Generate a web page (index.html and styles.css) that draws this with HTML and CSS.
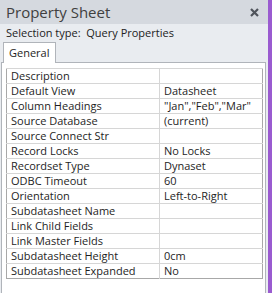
FILE: index.html
```html
<!DOCTYPE html>
<html>
<head>
<meta charset="utf-8">
<link rel="stylesheet" href="styles.css">
</head>
<body>
<div class="window">
  <div class="sheet">
    <div class="titlebar">
      <span class="title">Property Sheet</span>
      <svg class="close" width="9" height="9" viewBox="0 0 9 9"><path d="M1 1 L8 8 M8 1 L1 8" stroke="#4f545b" stroke-width="2.2"/></svg>
    </div>
    <div class="selection">Selection type:&nbsp; Query Properties</div>
    <div class="tabs"><div class="tab">General</div></div>
    <div class="panel">
      <table class="props">
        <tr><td class="name">Description</td><td class="val"></td></tr>
        <tr><td class="name">Default View</td><td class="val">Datasheet</td></tr>
        <tr><td class="name">Column Headings</td><td class="val">"Jan","Feb","Mar"</td></tr>
        <tr><td class="name">Source Database</td><td class="val">(current)</td></tr>
        <tr><td class="name">Source Connect Str</td><td class="val"></td></tr>
        <tr><td class="name">Record Locks</td><td class="val">No Locks</td></tr>
        <tr><td class="name">Recordset Type</td><td class="val">Dynaset</td></tr>
        <tr><td class="name">ODBC Timeout</td><td class="val">60</td></tr>
        <tr><td class="name">Orientation</td><td class="val">Left-to-Right</td></tr>
        <tr><td class="name">Subdatasheet Name</td><td class="val"></td></tr>
        <tr><td class="name">Link Child Fields</td><td class="val"></td></tr>
        <tr><td class="name">Link Master Fields</td><td class="val"></td></tr>
        <tr><td class="name">Subdatasheet Height</td><td class="val">0cm</td></tr>
        <tr><td class="name">Subdatasheet Expanded</td><td class="val">No</td></tr>
      </table>
    </div>
  </div>
  <div class="accent"></div>
</div>
</body>
</html>
```
FILE: styles.css
```css
html, body {
  margin: 0;
  padding: 0;
}
body {
  width: 272px;
  height: 293px;
  overflow: hidden;
  background: #e9ecf0;
  font-family: "Open Sans", "Noto Sans", sans-serif;
  color: #1e1e1e;
}
.window {
  display: flex;
  height: 293px;
}
.sheet {
  flex: 1;
  display: flex;
  flex-direction: column;
  padding-right: 2px;
}
.accent {
  width: 4px;
  background: #9a5bd0;
}
.titlebar {
  height: 24px;
  background: #d5d9df;
  display: flex;
  align-items: center;
  justify-content: space-between;
  padding: 0 9px 0 6px;
  margin-right: -2px;
}
.title {
  font-size: 15px;
  color: #404040;
  line-height: 24px;
}
.close {
  display: block;
}
.selection {
  font-size: 11px;
  height: 18px;
  line-height: 18px;
  padding-left: 6px;
  color: #222;
}
.tabs {
  display: flex;
  padding-left: 3px;
}
.tab {
  background: #fff;
  border: 1px solid #b0b4ba;
  border-bottom: none;
  font-size: 11px;
  line-height: 20px;
  height: 20px;
  padding: 0 6px 0 5px;
  margin-bottom: -1px;
  position: relative;
  z-index: 1;
}
.panel {
  flex: 1;
  background: #fff;
  border: 1px solid #b0b4ba;
  border-bottom: none;
  margin-left: 1px;
  padding: 5px 2px 0 4px;
}
.props {
  border-collapse: collapse;
  width: 257px;
  border: 1px solid #a8a8a8;
  font-size: 11px;
}
.props td {
  height: 14px;
  padding: 0 4px;
  line-height: 14px;
  border-top: 1px solid #d6d6d6;
  white-space: nowrap;
}
.props td.name {
  width: 144px;
  border-right: 1px solid #d6d6d6;
}
```
